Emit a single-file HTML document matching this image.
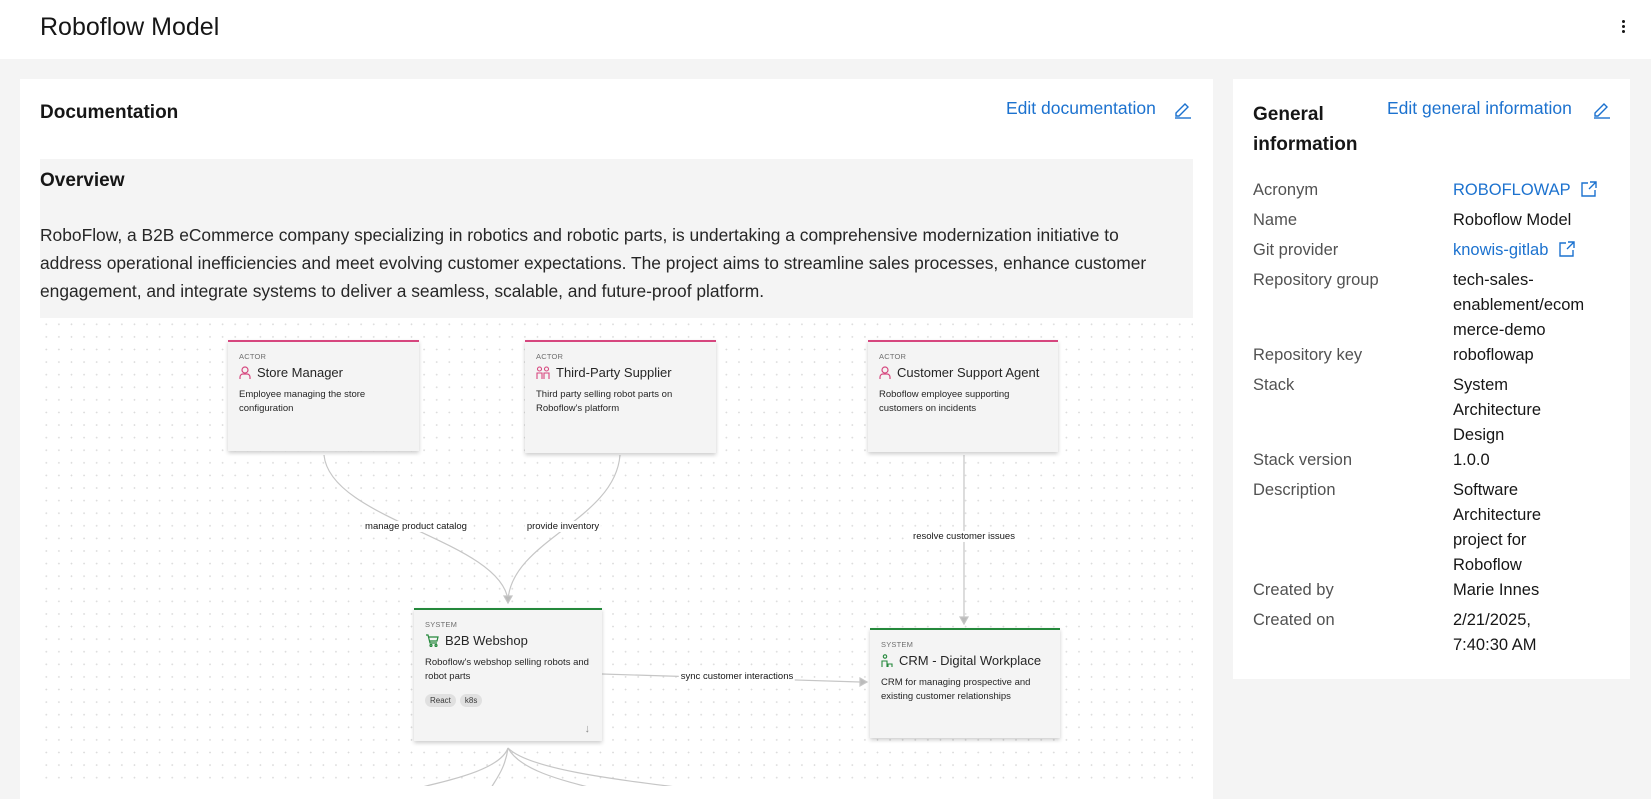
<!DOCTYPE html>
<html><head><meta charset="utf-8"><style>
*{margin:0;padding:0;box-sizing:border-box}
body{width:1651px;height:786px;overflow:hidden;background:#f4f4f4;font-family:"Liberation Sans",sans-serif;color:#161616;position:relative}
.abs{position:absolute}
#hdr{left:0;top:0;width:1651px;height:59px;background:#fff}
#left{left:20px;top:79px;width:1193px;height:720px;background:#fff}
#right{left:1233px;top:79px;width:397px;height:600px;background:#fff}
.link{color:#1c72cf}
.h{font-weight:bold;font-size:19px}
.ov{left:40px;top:159px;width:1153px;height:159px;background:#f4f4f4}
.dots{left:40px;top:318px;width:1153px;height:470px;background-image:radial-gradient(circle,#dadada 0.7px,transparent 1px);background-size:12.6px 12.6px}
.card{position:absolute;background:#f4f4f4;box-shadow:0 2px 4px rgba(0,0,0,.2);padding:10px 11px}
.card.a{border-top:2px solid #d6467e}
.card.s{border-top:2px solid #24883b}
.card .k{font-size:7.5px;color:#6f6f6f;letter-spacing:.2px}
.card .t{font-size:13px;margin-top:4px;display:flex;align-items:center;gap:6px;color:#262626}
.card .d{font-size:9.5px;line-height:14px;margin-top:8px;color:#262626}
.lbl{position:absolute;font-size:9.5px;background:#fff;padding:0 2px;transform:translateX(-50%)}
.row{display:flex;font-size:16.5px;line-height:25px;min-height:30px}
.row .l{width:200px;color:#525252}
.row .v{width:160px}
.tag{display:inline-block;font-size:8px;background:#e0e0e0;border-radius:8px;padding:2px 5px;margin-right:4px;color:#393939}
</style></head><body>
<div id="hdr" class="abs"></div>
<div class="abs" style="left:40px;top:13px;font-size:25px">Roboflow Model</div>
<div class="abs" style="left:1622px;top:20px;width:3px">
<div style="width:3px;height:3px;background:#161616;border-radius:2px;margin-bottom:2px"></div>
<div style="width:3px;height:3px;background:#161616;border-radius:2px;margin-bottom:2px"></div>
<div style="width:3px;height:3px;background:#161616;border-radius:2px"></div></div>

<div id="left" class="abs"></div>
<div class="abs h" style="left:40px;top:102px">Documentation</div>
<div class="abs link" style="left:1006px;top:98px;font-size:17.5px">Edit documentation</div>
<svg class="abs" style="left:1173px;top:100px" width="19" height="19" viewBox="0 0 19 19" fill="none" stroke="#1c72cf" stroke-width="1.4"><path d="M3 13 L12 4 L15 7 L6 16 H3 Z"/><path d="M2 18 H18"/></svg>
<div class="abs ov"></div>
<div class="abs h" style="left:40px;top:170px">Overview</div>
<div class="abs" style="left:40px;top:221px;width:1150px;font-size:17.4px;line-height:28px;color:#262626;white-space:nowrap">RoboFlow, a B2B eCommerce company specializing in robotics and robotic parts, is undertaking a comprehensive modernization initiative to<br>address operational inefficiencies and meet evolving customer expectations. The project aims to streamline sales processes, enhance customer<br>engagement, and integrate systems to deliver a seamless, scalable, and future-proof platform.</div>
<div class="abs dots"></div>

<svg class="abs" style="left:0;top:0" width="1213" height="786" fill="none" stroke="#c6c6c6" stroke-width="1.2">
<path d="M324 455 C330 520, 500 540, 508 600"/>
<path d="M620 455 C615 520, 512 540, 508 600"/>
<path d="M964 455 L964 618"/>
<path d="M602 674 L860 682"/>
<path d="M508 748 C500 770, 450 780, 410 790"/>
<path d="M508 748 C505 770, 495 780, 490 790"/>
<path d="M508 748 C520 770, 560 780, 600 790"/>
<path d="M508 748 C530 770, 620 780, 700 790"/>
<path d="M504 596 L508 603 L512 596 Z" fill="#bbb"/>
<path d="M960 617 L964 624 L968 617 Z" fill="#bbb"/>
<path d="M860 678 L867 682 L860 686 Z" fill="#bbb"/>
</svg>
<div class="lbl" style="left:416px;top:521px">manage product catalog</div>
<div class="lbl" style="left:563px;top:521px">provide inventory</div>
<div class="lbl" style="left:964px;top:531px">resolve customer issues</div>
<div class="lbl" style="left:737px;top:671px">sync customer interactions</div>

<div class="card a" style="left:228px;top:340px;width:191px;height:111px"><div class="k">ACTOR</div><div class="t"><svg width="12" height="14" viewBox="0 0 12 14" fill="none" stroke="#d6467e" stroke-width="1.2"><circle cx="6" cy="4" r="3"/><path d="M1 13 V11 a3 3 0 0 1 3-3 h4 a3 3 0 0 1 3 3 V13"/></svg>Store Manager</div><div class="d">Employee managing the store configuration</div></div>
<div class="card a" style="left:525px;top:340px;width:191px;height:113px"><div class="k">ACTOR</div><div class="t"><svg width="14" height="14" viewBox="0 0 14 14" fill="none" stroke="#d6467e" stroke-width="1.1"><circle cx="3.5" cy="3" r="2"/><circle cx="10.5" cy="3" r="2"/><path d="M1 13 V7 h5 v6 M8 13 V7 h5 v6"/></svg>Third-Party Supplier</div><div class="d">Third party selling robot parts on Roboflow's platform</div></div>
<div class="card a" style="left:868px;top:340px;width:190px;height:112px"><div class="k">ACTOR</div><div class="t"><svg width="12" height="14" viewBox="0 0 12 14" fill="none" stroke="#d6467e" stroke-width="1.2"><circle cx="6" cy="4" r="3"/><path d="M1 13 V11 a3 3 0 0 1 3-3 h4 a3 3 0 0 1 3 3 V13"/></svg>Customer Support Agent</div><div class="d">Roboflow employee supporting customers on incidents</div></div>
<div class="card s" style="left:414px;top:608px;width:188px;height:133px"><div class="k">SYSTEM</div><div class="t"><svg width="14" height="13" viewBox="0 0 14 13" fill="none" stroke="#24883b" stroke-width="1.2"><path d="M1 1 h2 l2 8 h7 M4 3 h9 l-1 4 H5"/><circle cx="6" cy="11.5" r="1"/><circle cx="11" cy="11.5" r="1"/></svg>B2B Webshop</div><div class="d">Roboflow's webshop selling robots and robot parts</div><div style="margin-top:6px"><span class="tag">React</span><span class="tag">k8s</span></div><div style="position:absolute;right:12px;bottom:6px;font-size:11px;color:#8d8d8d">↓</div></div>
<div class="card s" style="left:870px;top:628px;width:190px;height:110px"><div class="k">SYSTEM</div><div class="t"><svg width="12" height="14" viewBox="0 0 12 14" fill="none" stroke="#24883b" stroke-width="1.1"><circle cx="4" cy="2.5" r="1.7"/><path d="M1 13 V7 h5 v6 M7 13 V10 h4 v3"/></svg>CRM - Digital Workplace</div><div class="d">CRM for managing prospective and existing customer relationships</div></div>

<div id="right" class="abs"></div>
<div class="abs h" style="left:1253px;top:100px;line-height:30px">General<br>information</div>
<div class="abs link" style="left:1387px;top:98px;font-size:17.5px">Edit general information</div>
<svg class="abs" style="left:1592px;top:100px" width="19" height="19" viewBox="0 0 19 19" fill="none" stroke="#1c72cf" stroke-width="1.4"><path d="M3 13 L12 4 L15 7 L6 16 H3 Z"/><path d="M2 18 H18"/></svg>
<div class="abs" style="left:1253px;top:178px">
<div class="row"><div class="l">Acronym</div><div class="v link" style="white-space:nowrap">ROBOFLOWAP <svg style="vertical-align:-2px;margin-left:6px" width="16" height="16" viewBox="0 0 16 16" fill="none" stroke="#1c72cf" stroke-width="1.4"><path d="M7 2 H1 V15 H14 V9 M9 1 H15 V7 M15 1 L8 8"/></svg></div></div>
<div class="row"><div class="l">Name</div><div class="v">Roboflow Model</div></div>
<div class="row"><div class="l">Git provider</div><div class="v link" style="white-space:nowrap">knowis-gitlab <svg style="vertical-align:-2px;margin-left:6px" width="16" height="16" viewBox="0 0 16 16" fill="none" stroke="#1c72cf" stroke-width="1.4"><path d="M7 2 H1 V15 H14 V9 M9 1 H15 V7 M15 1 L8 8"/></svg></div></div>
<div class="row"><div class="l">Repository group</div><div class="v">tech-sales-<br>enablement/ecom<br>merce-demo</div></div>
<div class="row"><div class="l">Repository key</div><div class="v">roboflowap</div></div>
<div class="row"><div class="l">Stack</div><div class="v">System<br>Architecture<br>Design</div></div>
<div class="row"><div class="l">Stack version</div><div class="v">1.0.0</div></div>
<div class="row"><div class="l">Description</div><div class="v">Software<br>Architecture<br>project for<br>Roboflow</div></div>
<div class="row"><div class="l">Created by</div><div class="v">Marie Innes</div></div>
<div class="row"><div class="l">Created on</div><div class="v">2/21/2025,<br>7:40:30 AM</div></div>
</div>
</body></html>
